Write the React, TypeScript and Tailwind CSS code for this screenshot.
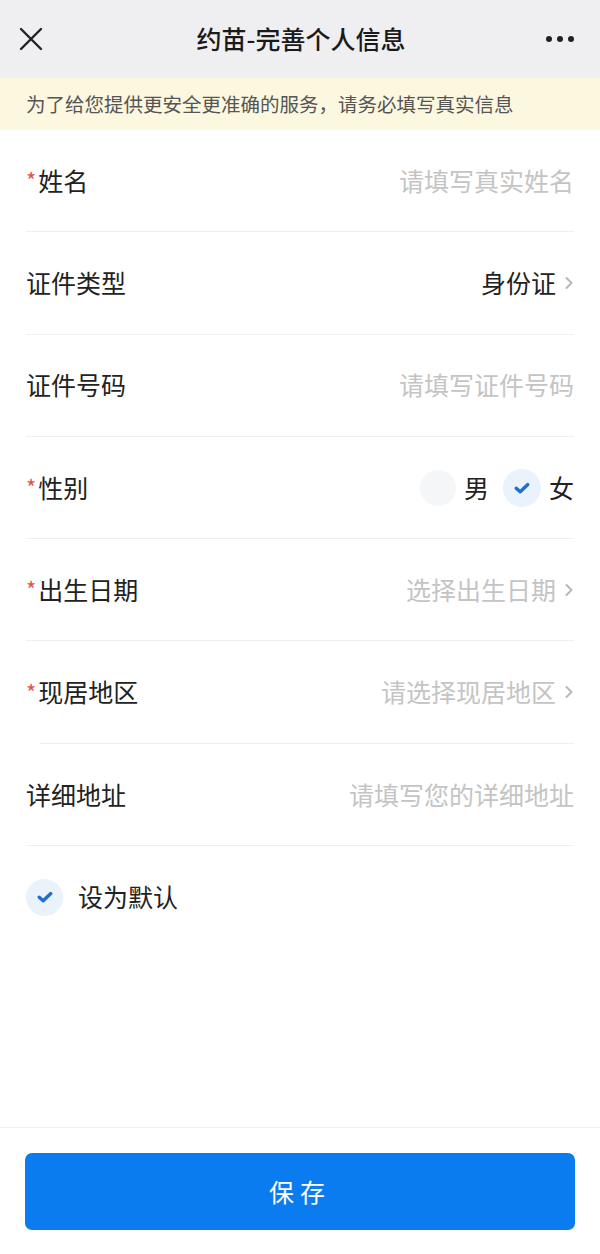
import React from "react";

const font = { fontFamily: '"Noto Sans CJK SC", "Noto Sans", sans-serif' };

function Chevron() {
  return (
    <svg width="10" height="16" viewBox="0 0 10 16" className="ml-[8px]">
      <path d="M2.5 3 L7.5 8 L2.5 13" fill="none" stroke="#b8b8b8" strokeWidth="2" strokeLinecap="round" strokeLinejoin="round" />
    </svg>
  );
}

function Check({ size = 38 }: { size?: number }) {
  return (
    <div
      className="flex items-center justify-center rounded-full bg-[#eaf2fc]"
      style={{ width: size, height: size }}
    >
      <svg width="18" height="14" viewBox="0 0 18 14">
        <path d="M3.2 7.2 L7.2 10.8 L14.8 3.6" fill="none" stroke="#1f6fd0" strokeWidth="3.4" strokeLinecap="round" strokeLinejoin="round" />
      </svg>
    </div>
  );
}

function Row({
  label,
  required,
  children,
  lineClass = "ml-[26px]",
}: {
  label: string;
  required?: boolean;
  children: React.ReactNode;
  lineClass?: string;
}) {
  return (
    <div className={`${lineClass} mr-[26px] h-[102.3px] border-b border-[#efefef] flex items-center justify-between`}>
      <div className={`flex items-center text-[25px] text-[#222] ${lineClass === "ml-[26px]" ? "" : "-ml-[14px]"}`}>
        {required && <span className="text-[#e0564b] text-[22px] mr-[2px] mt-[-2px]">*</span>}
        <span>{label}</span>
      </div>
      <div className="flex items-center">{children}</div>
    </div>
  );
}

export default function App() {
  return (
    <div className="w-[600px] h-[1254px] bg-white flex flex-col" style={font}>
      <div className="h-[78px] bg-[#efeff1] flex items-center justify-between pl-[18px] pr-[26px] shrink-0">
        <svg width="26" height="26" viewBox="0 0 26 26">
          <path d="M3 3 L23 23 M23 3 L3 23" stroke="#222" strokeWidth="2.4" strokeLinecap="round" />
        </svg>
        <div className="text-[25px] font-medium text-[#1a1a1a] ml-[12px]">约苗-完善个人信息</div>
        <div className="flex items-center gap-[5px]">
          <span className="w-[6px] h-[6px] rounded-full bg-[#222]" />
          <span className="w-[6px] h-[6px] rounded-full bg-[#222]" />
          <span className="w-[6px] h-[6px] rounded-full bg-[#222]" />
        </div>
      </div>
      <div className="h-[52px] bg-[#fcf7df] flex items-center px-[26px] text-[19.5px] text-[#555] shrink-0">
        为了给您提供更安全更准确的服务，请务必填写真实信息
      </div>

      <Row label="姓名" required>
        <span className="text-[25px] text-[#c4c4c4]">请填写真实姓名</span>
      </Row>
      <Row label="证件类型">
        <span className="text-[25px] text-[#222]">身份证</span>
        <Chevron />
      </Row>
      <Row label="证件号码">
        <span className="text-[25px] text-[#c4c4c4]">请填写证件号码</span>
      </Row>
      <Row label="性别" required>
        <div className="w-[36px] h-[36px] rounded-full bg-[#f5f6f8]" />
        <span className="text-[25px] text-[#222] ml-[8px]">男</span>
        <div className="ml-[14px]">
          <Check size={38} />
        </div>
        <span className="text-[25px] text-[#222] ml-[8px]">女</span>
      </Row>
      <Row label="出生日期" required>
        <span className="text-[25px] text-[#c4c4c4]">选择出生日期</span>
        <Chevron />
      </Row>
      <Row label="现居地区" required lineClass="ml-[40px]">
        <span className="text-[25px] text-[#c4c4c4]">请选择现居地区</span>
        <Chevron />
      </Row>
      <Row label="详细地址">
        <span className="text-[25px] text-[#c4c4c4]">请填写您的详细地址</span>
      </Row>

      <div className="h-[102px] flex items-center px-[26px]">
        <Check size={37} />
        <span className="ml-[15px] text-[25px] text-[#222]">设为默认</span>
      </div>

      <div className="flex-1" />

      <div className="border-t border-[#f0f0f0] h-[127px] shrink-0 px-[25px] pt-[25px]">
        <button className="w-full h-[77px] rounded-[7px] bg-[#0b7bf0] text-white text-[25px] tracking-[6px] flex items-center justify-center">
          保存
        </button>
      </div>
    </div>
  );
}
